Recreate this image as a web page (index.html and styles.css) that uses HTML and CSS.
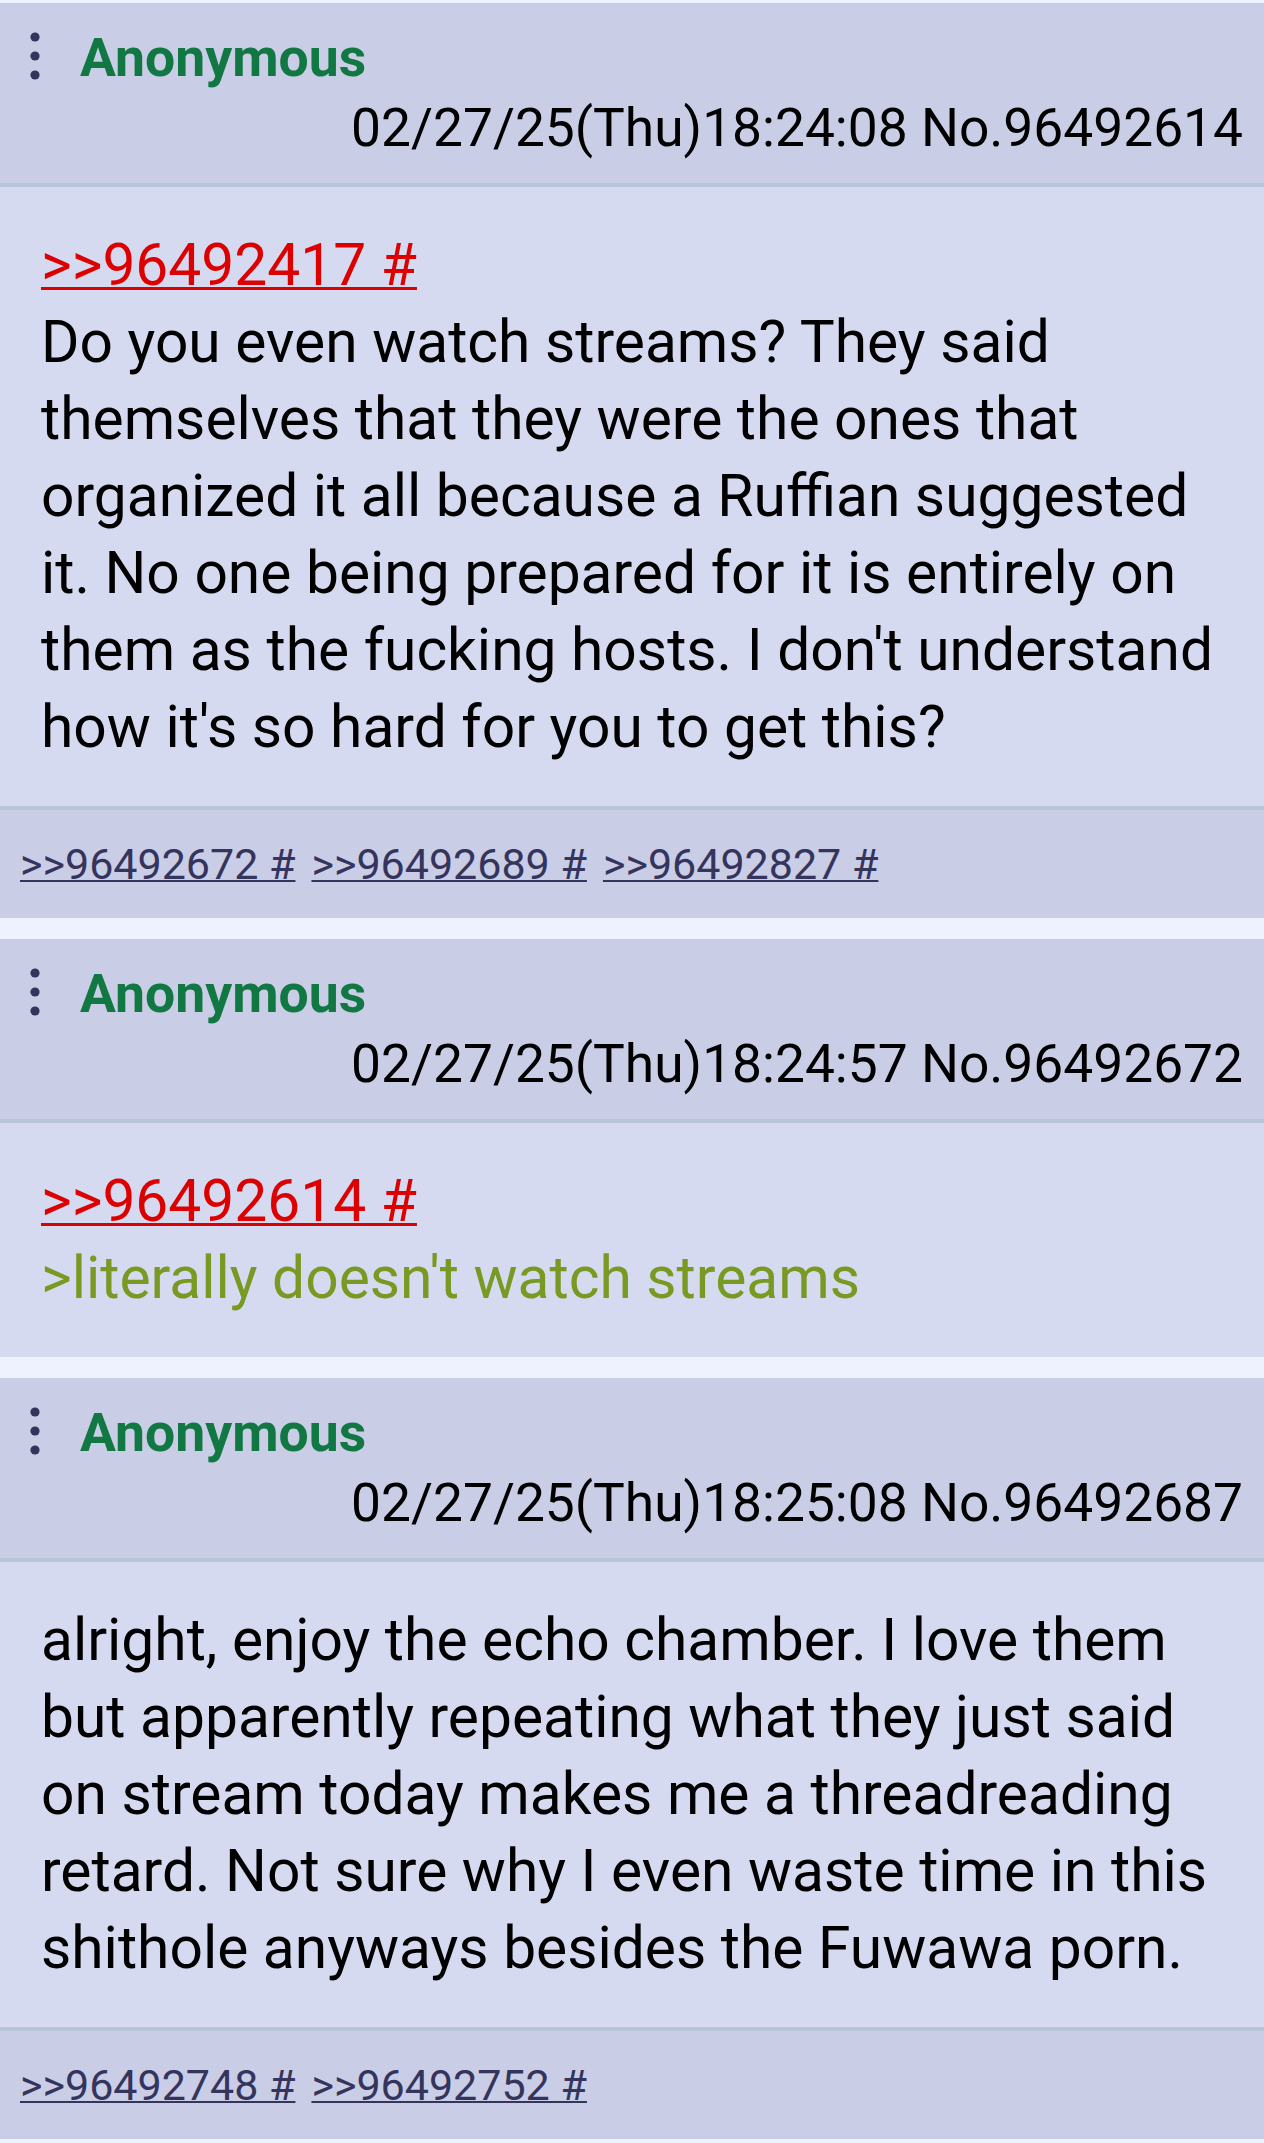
FILE: index.html
```html
<!DOCTYPE html>
<html lang="en">
<head>
  <meta charset="UTF-8" />
  <meta name="viewport" content="width=device-width, initial-scale=1.0"/>
  <title>Thread</title>
  <link rel="stylesheet" href="styles.css">
</head>
<body>
  <div class="thread">

    <div class="post">
      <div class="post-head">
        <div class="name-row">
          <svg class="menu" viewBox="0 0 10 48"><circle cx="5" cy="5" r="4.6"/><circle cx="5" cy="24" r="4.6"/><circle cx="5" cy="43" r="4.6"/></svg>
          <span class="name">Anonymous</span>
        </div>
        <div class="date">02/27/25(Thu)18:24:08 No.96492614</div>
      </div>
      <div class="post-body">
        <a class="quotelink" href="#">&gt;&gt;96492417 #</a><br>
        Do you even watch streams? They said themselves that they were the ones that organized it all because a Ruffian suggested it. No one being prepared for it is entirely on them as the fucking hosts. I don't understand how it's so hard for you to get this?
      </div>
      <div class="post-replies">
        <a href="#">&gt;&gt;96492672 #</a>
        <a href="#">&gt;&gt;96492689 #</a>
        <a href="#">&gt;&gt;96492827 #</a>
      </div>
    </div>

    <div class="post">
      <div class="post-head">
        <div class="name-row">
          <svg class="menu" viewBox="0 0 10 48"><circle cx="5" cy="5" r="4.6"/><circle cx="5" cy="24" r="4.6"/><circle cx="5" cy="43" r="4.6"/></svg>
          <span class="name">Anonymous</span>
        </div>
        <div class="date">02/27/25(Thu)18:24:57 No.96492672</div>
      </div>
      <div class="post-body">
        <a class="quotelink" href="#">&gt;&gt;96492614 #</a><br>
        <span class="quote">&gt;literally doesn't watch streams</span>
      </div>
    </div>

    <div class="post">
      <div class="post-head">
        <div class="name-row">
          <svg class="menu" viewBox="0 0 10 48"><circle cx="5" cy="5" r="4.6"/><circle cx="5" cy="24" r="4.6"/><circle cx="5" cy="43" r="4.6"/></svg>
          <span class="name">Anonymous</span>
        </div>
        <div class="date">02/27/25(Thu)18:25:08 No.96492687</div>
      </div>
      <div class="post-body">
        alright, enjoy the echo chamber. I love them but apparently repeating what they just said on stream today makes me a threadreading retard. Not sure why I even waste time in this shithole anyways besides the Fuwawa porn.
      </div>
      <div class="post-replies">
        <a href="#">&gt;&gt;96492748 #</a>
        <a href="#">&gt;&gt;96492752 #</a>
      </div>
    </div>

  </div>
</body>
</html>
```

FILE: styles.css
```css
* {
  box-sizing: border-box;
  margin: 0;
  padding: 0;
}

body {
  font-family: Roboto, "Noto Sans", sans-serif;
  background: #eef2ff;
  color: #000;
}

.thread {
  padding-top: 3px;
  display: flex;
  flex-direction: column;
  gap: 21px;
}

.post {
  background: #d6daf0;
}

.post-head {
  background: #c9cde6;
  border-bottom: 4px solid #b7c5d9;
  padding: 19px 21px 19px 30px;
  height: 184px;
}

.name-row {
  display: flex;
  align-items: center;
  height: 71px;
  gap: 40px;
}

.menu {
  width: 10px;
  height: 48px;
  fill: #34345c;
  margin-top: -4px;
}

.name {
  color: #117743;
  font-weight: bold;
  font-size: 53.5px;
  line-height: 71px;
}

.date {
  text-align: right;
  font-size: 53.3px;
  line-height: 71px;
}

.post-body {
  font-size: 58.7px;
  line-height: 77px;
  padding: 40px 20px 40px 41px;
}

.quotelink {
  color: #dd0000;
  text-decoration-thickness: 3px;
}

.quote {
  color: #789922;
}

.post-replies {
  background: #c9cde6;
  border-top: 4px solid #b7c5d9;
  height: 112px;
  display: flex;
  align-items: center;
  gap: 16px;
  padding-left: 20px;
  font-size: 43px;
}

.post-replies a {
  color: #34345c;
  text-decoration-thickness: 2px;
}
```
